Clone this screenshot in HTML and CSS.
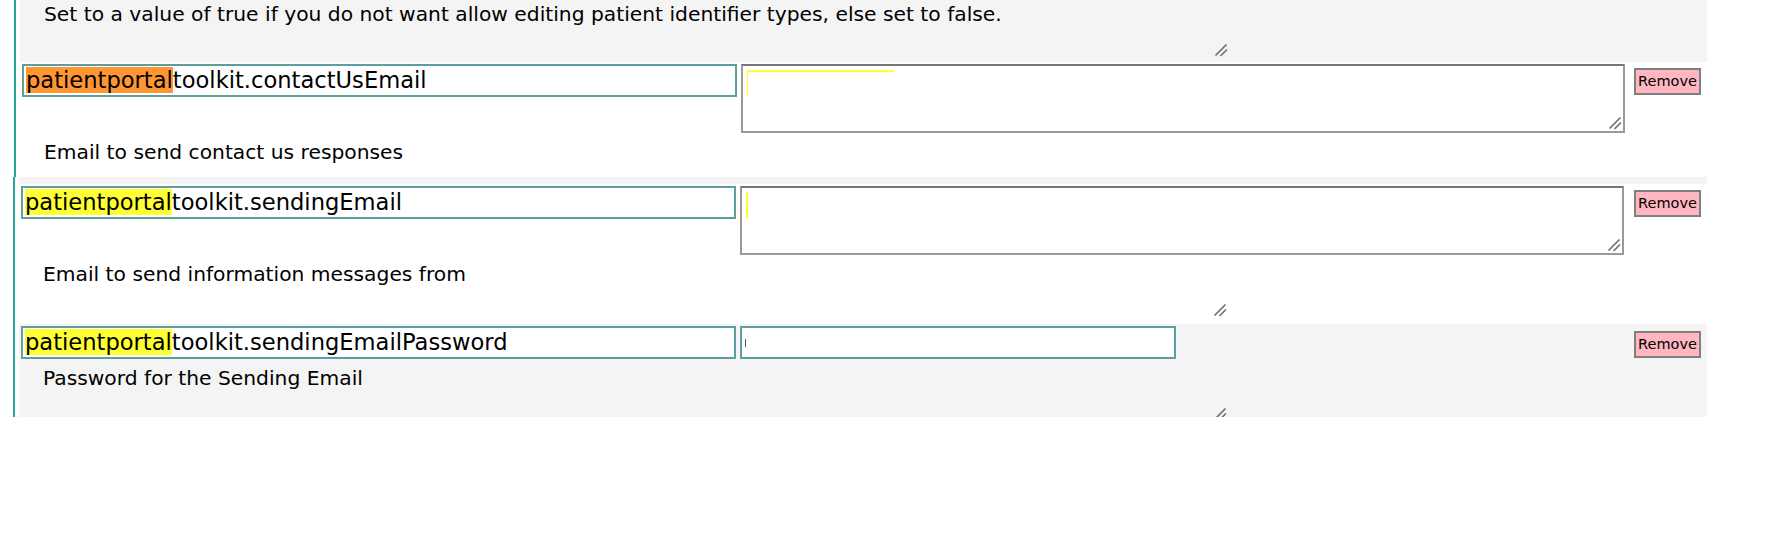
FILE: index.html
```html
<!DOCTYPE html>
<html lang="en">
<head>
<meta charset="utf-8">
<title>Global properties</title>
<link rel="stylesheet" href="styles.css">
</head>
<body>
<div class="group group-a">
  <div class="prop prop-gray prop-first">
    <div class="desc desc-first">Set to a value of true if you do not want allow editing patient identifier types, else set to false.<svg class="grip" viewBox="0 0 14 14" width="14" height="14" aria-hidden="true"><path d="M1.5 12.5 L12.5 1.5 M6.5 13 L13 6.5"/></svg></div>
  </div>
  <div class="prop prop-second">
    <div class="prop-line">
      <div class="name-box"><span class="hl hl-active">patientportal</span>toolkit.contactUsEmail</div>
      <div class="value-area"><span class="mark-l"></span><svg class="grip" viewBox="0 0 14 14" width="14" height="14" aria-hidden="true"><path d="M1.5 12.5 L12.5 1.5 M6.5 13 L13 6.5"/></svg></div>
      <button class="remove" type="button">Remove</button>
    </div>
    <div class="desc">Email to send contact us responses<svg class="grip" viewBox="0 0 14 14" width="14" height="14" aria-hidden="true"><path d="M1.5 12.5 L12.5 1.5 M6.5 13 L13 6.5"/></svg></div>
  </div>
</div>
<div class="group group-b">
  <div class="strip"></div>
  <div class="prop prop-third">
    <div class="prop-line">
      <div class="name-box"><span class="hl">patientportal</span>toolkit.sendingEmail</div>
      <div class="value-area"><span class="mark-bar"></span><svg class="grip" viewBox="0 0 14 14" width="14" height="14" aria-hidden="true"><path d="M1.5 12.5 L12.5 1.5 M6.5 13 L13 6.5"/></svg></div>
      <button class="remove" type="button">Remove</button>
    </div>
    <div class="desc">Email to send information messages from<svg class="grip" viewBox="0 0 14 14" width="14" height="14" aria-hidden="true"><path d="M1.5 12.5 L12.5 1.5 M6.5 13 L13 6.5"/></svg></div>
  </div>
  <div class="prop prop-gray prop-fourth">
    <div class="prop-line">
      <div class="name-box"><span class="hl">patientportal</span>toolkit.sendingEmailPassword</div>
      <div class="value-input"><span class="caret"></span></div>
      <button class="remove remove-low" type="button">Remove</button>
    </div>
    <div class="desc">Password for the Sending Email<svg class="grip" viewBox="0 0 14 14" width="14" height="14" aria-hidden="true"><path d="M1.5 12.5 L12.5 1.5 M6.5 13 L13 6.5"/></svg></div>
  </div>
</div>
</body>
</html>
```
FILE: styles.css
```css
* {
  box-sizing: border-box;
}

html,
body {
  margin: 0;
  background: #ffffff;
}

body {
  font-family: "DejaVu Sans", Verdana, sans-serif;
  color: #000000;
}

.group {
  margin: 0 59px 0 14px;
  border-left: 2px solid #26a69a;
  padding-left: 4px;
}

.group-b {
  margin-left: 13px;
}

.prop {
  padding: 2px 6px 0 2px;
  overflow: hidden;
  background: #ffffff;
}

.prop-gray {
  background: #f4f4f4;
}

.prop-first {
  height: 62px;
  padding-top: 0;
}

.prop-second {
  height: 115px;
}

.prop-third {
  height: 140px;
}

.prop-fourth {
  height: 93px;
}

.strip {
  height: 7px;
  background: #f4f4f4;
}

.prop-line {
  display: flex;
  align-items: flex-start;
  gap: 4px;
}

.name-box {
  flex: none;
  width: 715px;
  height: 33px;
  border: 2px solid #5f9ea0;
  padding: 1px 2px 0;
  background: #ffffff;
  font-size: 22.6px;
  line-height: normal;
  white-space: nowrap;
  overflow: hidden;
}

.hl {
  background: #ffff33;
}

.hl-active {
  background: #ff9632;
}

.value-area {
  position: relative;
  flex: none;
  width: 884px;
  height: 69px;
  border: 2px solid #9a9a9a;
  border-top-color: #767676;
  padding: 4px;
  background: #ffffff;
  overflow: hidden;
}

.grip {
  position: absolute;
  right: 1px;
  bottom: 1px;
  fill: none;
  stroke: #6e6e6e;
  stroke-width: 1.6;
}

.mark-l {
  display: block;
  width: 147px;
  height: 26px;
  border-top: 2px solid #ffff33;
  border-left: 1px solid #ffff33;
}

.mark-bar {
  display: block;
  width: 2px;
  height: 26px;
  background: #ffff33;
}

.value-input {
  flex: none;
  width: 436px;
  height: 33px;
  border: 2px solid #5f9ea0;
  padding: 11px 3px;
  background: #ffffff;
}

.caret {
  display: block;
  width: 1px;
  height: 8px;
  background: #555555;
}

.remove {
  flex: none;
  margin-left: auto;
  margin-top: 4px;
  height: 27px;
  width: 67px;
  padding: 0;
  border: 2px solid #7f7f7f;
  border-radius: 0;
  background: #ffb6c1;
  color: #000000;
  font-family: "DejaVu Sans", Verdana, sans-serif;
  font-size: 14.5px;
  line-height: 1;
}

.remove-low {
  margin-top: 5px;
}

.desc {
  position: relative;
  width: 1207px;
  height: 63px;
  padding: 7px 0 0 22px;
  font-size: 20.25px;
  line-height: normal;
  white-space: nowrap;
  overflow: hidden;
}

.desc-first {
  height: 58px;
  padding-top: 2px;
}
```
